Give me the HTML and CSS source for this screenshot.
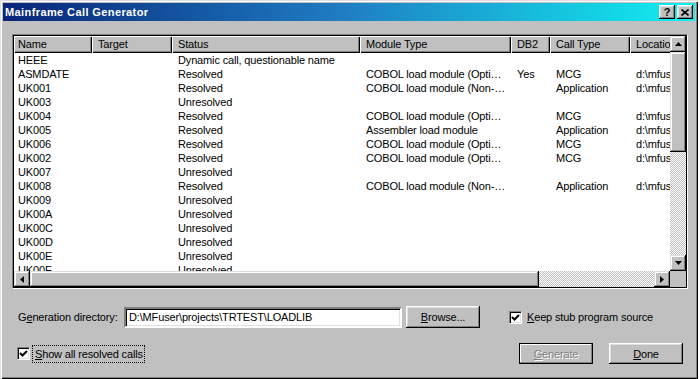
FILE: index.html
```html
<!DOCTYPE html>
<html lang="en">
<head>
  <meta charset="UTF-8">
  <title>Mainframe Call Generator</title>
  <link rel="stylesheet" href="styles.css">
</head>
<body>
  <div class="window">
    <div class="titlebar">
      <span class="title">Mainframe Call Generator</span>
      <div class="title-btns">
        <button class="tbtn help">?</button>
        <button class="tbtn">
          <svg width="8" height="7" viewBox="0 0 8 7"><path d="M0.5 0.5 L7.5 6.5 M7.5 0.5 L0.5 6.5" stroke="#000" stroke-width="1.6"/></svg>
        </button>
      </div>
    </div>

    <div class="dialog">
      <!-- Lista de chamadas -->
      <div class="list">
        <div class="list-inner">
          <div class="list-view">
            <div class="row head">
              <div class="cell">Name</div>
              <div class="cell">Target</div>
              <div class="cell">Status</div>
              <div class="cell">Module Type</div>
              <div class="cell">DB2</div>
              <div class="cell">Call Type</div>
              <div class="cell">Location</div>
            </div>
            <div class="row"><div class="cell">HEEE</div><div class="cell"></div><div class="cell">Dynamic call, questionable name</div><div class="cell"></div><div class="cell"></div><div class="cell"></div><div class="cell"></div></div>
            <div class="row"><div class="cell">ASMDATE</div><div class="cell"></div><div class="cell">Resolved</div><div class="cell">COBOL load module (Opti…</div><div class="cell">Yes</div><div class="cell">MCG</div><div class="cell">d:\mfuser</div></div>
            <div class="row"><div class="cell">UK001</div><div class="cell"></div><div class="cell">Resolved</div><div class="cell">COBOL load module (Non-…</div><div class="cell"></div><div class="cell">Application</div><div class="cell">d:\mfuser</div></div>
            <div class="row"><div class="cell">UK003</div><div class="cell"></div><div class="cell">Unresolved</div><div class="cell"></div><div class="cell"></div><div class="cell"></div><div class="cell"></div></div>
            <div class="row"><div class="cell">UK004</div><div class="cell"></div><div class="cell">Resolved</div><div class="cell">COBOL load module (Opti…</div><div class="cell"></div><div class="cell">MCG</div><div class="cell">d:\mfuser</div></div>
            <div class="row"><div class="cell">UK005</div><div class="cell"></div><div class="cell">Resolved</div><div class="cell">Assembler load module</div><div class="cell"></div><div class="cell">Application</div><div class="cell">d:\mfuser</div></div>
            <div class="row"><div class="cell">UK006</div><div class="cell"></div><div class="cell">Resolved</div><div class="cell">COBOL load module (Opti…</div><div class="cell"></div><div class="cell">MCG</div><div class="cell">d:\mfuser</div></div>
            <div class="row"><div class="cell">UK002</div><div class="cell"></div><div class="cell">Resolved</div><div class="cell">COBOL load module (Opti…</div><div class="cell"></div><div class="cell">MCG</div><div class="cell">d:\mfuser</div></div>
            <div class="row"><div class="cell">UK007</div><div class="cell"></div><div class="cell">Unresolved</div><div class="cell"></div><div class="cell"></div><div class="cell"></div><div class="cell"></div></div>
            <div class="row"><div class="cell">UK008</div><div class="cell"></div><div class="cell">Resolved</div><div class="cell">COBOL load module (Non-…</div><div class="cell"></div><div class="cell">Application</div><div class="cell">d:\mfuser</div></div>
            <div class="row"><div class="cell">UK009</div><div class="cell"></div><div class="cell">Unresolved</div><div class="cell"></div><div class="cell"></div><div class="cell"></div><div class="cell"></div></div>
            <div class="row"><div class="cell">UK00A</div><div class="cell"></div><div class="cell">Unresolved</div><div class="cell"></div><div class="cell"></div><div class="cell"></div><div class="cell"></div></div>
            <div class="row"><div class="cell">UK00C</div><div class="cell"></div><div class="cell">Unresolved</div><div class="cell"></div><div class="cell"></div><div class="cell"></div><div class="cell"></div></div>
            <div class="row"><div class="cell">UK00D</div><div class="cell"></div><div class="cell">Unresolved</div><div class="cell"></div><div class="cell"></div><div class="cell"></div><div class="cell"></div></div>
            <div class="row"><div class="cell">UK00E</div><div class="cell"></div><div class="cell">Unresolved</div><div class="cell"></div><div class="cell"></div><div class="cell"></div><div class="cell"></div></div>
            <div class="row"><div class="cell">UK00F</div><div class="cell"></div><div class="cell">Unresolved</div><div class="cell"></div><div class="cell"></div><div class="cell"></div><div class="cell"></div></div>
          </div>

          <div class="vscroll">
            <div class="sbtn"><svg width="7" height="4" viewBox="0 0 7 4"><polygon points="3.5,0 7,4 0,4" fill="#000"/></svg></div>
            <div class="vthumb"></div>
            <div class="track"></div>
            <div class="sbtn"><svg width="7" height="4" viewBox="0 0 7 4"><polygon points="0,0 7,0 3.5,4" fill="#000"/></svg></div>
          </div>
          <div class="hscroll">
            <div class="sbtn"><svg width="4" height="7" viewBox="0 0 4 7"><polygon points="4,0 4,7 0,3.5" fill="#000"/></svg></div>
            <div class="hthumb"></div>
            <div class="track"></div>
            <div class="sbtn"><svg width="4" height="7" viewBox="0 0 4 7"><polygon points="0,0 0,7 4,3.5" fill="#000"/></svg></div>
          </div>
          <div class="corner"></div>
        </div>
      </div>

      <!-- Diretório de geração -->
      <div class="form-row first">
        <label class="dir-label">G<u>e</u>neration directory:</label>
        <div class="textbox">D:\MFuser\projects\TRTEST\LOADLIB</div>
        <button class="btn browse"><u>B</u>rowse...</button>
        <div class="check keep">
          <span class="box"><svg width="9" height="9" viewBox="0 0 9 9"><path d="M1 4 L3.5 6.5 L8 2" fill="none" stroke="#000" stroke-width="2"/></svg></span>
          <span class="check-label"><u>K</u>eep stub program source</span>
        </div>
      </div>

      <div class="form-row second">
        <div class="check show">
          <span class="box"><svg width="9" height="9" viewBox="0 0 9 9"><path d="M1 4 L3.5 6.5 L8 2" fill="none" stroke="#000" stroke-width="2"/></svg></span>
          <span class="check-label focus"><u>S</u>how all resolved calls</span>
        </div>
        <button class="btn default disabled"><u>G</u>enerate</button>
        <button class="btn done"><u>D</u>one</button>
      </div>
    </div>
  </div>
</body>
</html>
```

FILE: styles.css
```css
/* Base */
* { box-sizing: border-box; margin: 0; padding: 0; }
body { background: #fff; font-family: 'Liberation Sans', Arial, sans-serif; font-size: 11px; letter-spacing: -0.15px; color: #000; }
button { font-family: inherit; font-size: 11px; letter-spacing: -0.15px; color: #000; }

/* Janela */
.window {
  width: 698px;
  height: 379px;
  padding: 3px;
  background: #c0c0c0;
  box-shadow: inset 1px 1px #dfdfdf, inset 2px 2px #fff, inset -1px -1px #000, inset -2px -2px #808080;
}

.titlebar {
  height: 18px;
  display: flex;
  align-items: center;
  justify-content: space-between;
  padding: 0 2px 0 2px;
  background: linear-gradient(to right, #08257a, #1f7fc4 50%, #10f0f0);
}
.title { color: #fff; font-weight: bold; font-size: 11px; letter-spacing: 0.4px; }
.title-btns { display: flex; gap: 2px; }
.tbtn {
  width: 16px;
  height: 14px;
  border: none;
  background: #c0c0c0;
  display: flex;
  align-items: center;
  justify-content: center;
  box-shadow: inset -1px -1px #000, inset 1px 1px #fff, inset -2px -2px #808080, inset 2px 2px #dfdfdf;
}
.tbtn.help { font-weight: bold; font-size: 11px; line-height: 1; padding-top: 1px; }

.dialog { padding: 13px 9px 0 9px; }

/* Lista */
.list {
  width: 676px;
  height: 255px;
  border: 1px solid;
  border-color: #808080 #fff #fff #808080;
}
.list-inner {
  height: 100%;
  border: 1px solid #000;
  display: grid;
  grid-template-columns: 1fr 16px;
  grid-template-rows: 1fr 16px;
  background: #fff;
}
.list-view { overflow: hidden; background: #fff; }

.row {
  display: grid;
  grid-template-columns: 78px 80px 188px 151px 39px 80px 60px;
  height: 14px;
  line-height: 14px;
}
.cell { padding-left: 6px; white-space: nowrap; overflow: hidden; }
.cell:first-child { padding-left: 4px; }

.row.head { height: 17px; line-height: 16px; background: #c0c0c0; }
.row.head .cell {
  box-shadow: inset 1px 1px #fff, inset -1px -1px #000, inset -2px -2px #808080;
}

/* Barras de rolagem */
.vscroll { display: flex; flex-direction: column; }
.hscroll { display: flex; }
.sbtn {
  width: 16px;
  height: 16px;
  flex: none;
  background: #c0c0c0;
  display: flex;
  align-items: center;
  justify-content: center;
  box-shadow: inset -1px -1px #000, inset 1px 1px #dfdfdf, inset -2px -2px #808080, inset 2px 2px #fff;
}
.sbtn svg { display: block; }
.vthumb, .hthumb {
  flex: none;
  background: #c0c0c0;
  box-shadow: inset -1px -1px #000, inset 1px 1px #dfdfdf, inset -2px -2px #808080, inset 2px 2px #fff;
}
.vthumb { height: 100px; }
.hthumb { width: 509px; }
.track {
  flex: 1;
  background: repeating-conic-gradient(#c0c0c0 0 25%, #fff 0 50%) 0 0 / 2px 2px;
}
.corner { background: #c0c0c0; }

/* Formulário */
.form-row { display: flex; align-items: center; }
.form-row.first { margin-top: 17px; height: 22px; }
.form-row.second { margin-top: 15px; height: 21px; }

.dir-label { margin-left: 6px; width: 106px; }
.textbox {
  width: 278px;
  height: 21px;
  line-height: 17px;
  padding-left: 3px;
  background: #fff;
  border: 2px solid;
  border-color: #808080 #fff #fff #808080;
  box-shadow: inset 1px 1px #000, inset -1px -1px #dfdfdf;
  white-space: nowrap;
}

.btn {
  width: 74px;
  height: 22px;
  border: none;
  background: #c0c0c0;
  box-shadow: inset -1px -1px #000, inset 1px 1px #fff, inset -2px -2px #808080, inset 2px 2px #dfdfdf;
}
.browse { margin-left: 4px; }
.btn.default { margin-left: auto; height: 21px; border: 1px solid #000; box-shadow: inset -1px -1px #808080, inset 1px 1px #fff; }
.btn.disabled { color: #808080; text-shadow: 1px 1px #fff; }
.btn.done { margin-left: 16px; margin-right: 3px; height: 21px; }

.check { display: flex; align-items: center; }
.keep { margin-left: 29px; }
.show { margin-left: 5px; }
.box {
  width: 13px;
  height: 13px;
  background: #fff;
  border: 1px solid;
  border-color: #808080 #fff #fff #808080;
  box-shadow: inset 1px 1px #000, inset -1px -1px #dfdfdf;
  display: flex;
  align-items: center;
  justify-content: center;
}
.box svg { display: block; }
.check-label { margin-left: 5px; }
.check-label.focus { margin-left: 3px; padding: 2px 1px 2px 2px; outline: 1px dotted #000; }
```
